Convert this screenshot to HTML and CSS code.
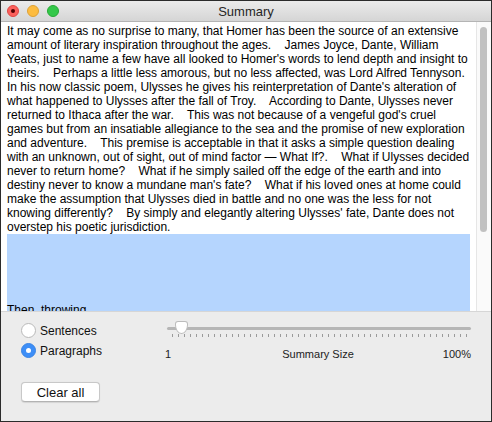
FILE: index.html
```html
<!DOCTYPE html>
<html>
<head>
<meta charset="utf-8">
<link rel="stylesheet" href="styles.css">
</head>
<body>
<div class="window">
  <div class="titlebar">
    <div class="lights">
      <span class="light close"><span class="dot"></span></span>
      <span class="light min"></span>
      <span class="light max"></span>
    </div>
    <div class="title">Summary</div>
  </div>
  <div class="content">
    <div class="textview">
      <p class="para">It may come as no surprise to many, that Homer has been the source of an extensive amount of literary inspiration throughout the ages.&nbsp;&nbsp;&nbsp; James Joyce, Dante, William Yeats, just to name a few have all looked to Homer's words to lend depth and insight to theirs.&nbsp;&nbsp;&nbsp; Perhaps a little less amorous, but no less affected, was Lord Alfred Tennyson. In his now classic poem, Ulysses he gives his reinterpretation of Dante's alteration of what happened to Ulysses after the fall of Troy.&nbsp;&nbsp;&nbsp; According to Dante, Ulysses never returned to Ithaca after the war.&nbsp;&nbsp;&nbsp; This was not because of a vengeful god's cruel games but from an insatiable allegiance to the sea and the promise of new exploration and adventure.&nbsp;&nbsp;&nbsp; This premise is acceptable in that it asks a simple question dealing with an unknown, out of sight, out of mind factor — What If?.&nbsp;&nbsp;&nbsp; What if Ulysses decided never to return home?&nbsp;&nbsp;&nbsp; What if he simply sailed off the edge of the earth and into destiny never to know a mundane man's fate?&nbsp;&nbsp;&nbsp; What if his loved ones at home could make the assumption that Ulysses died in battle and no one was the less for not knowing differently?&nbsp;&nbsp;&nbsp; By simply and elegantly altering Ulysses' fate, Dante does not overstep his poetic jurisdiction.</p>
      <p class="para selected">Then, throwing</p>
    </div>
    <div class="scrollbar"><div class="thumb"></div></div>
  </div>
  <div class="panel">
    <div class="left">
      <div class="radios">
        <label class="radio"><span class="circle"></span>Sentences</label>
        <label class="radio"><span class="circle on"><span class="inner"></span></span>Paragraphs</label>
      </div>
      <button class="btn">Clear all</button>
    </div>
    <div class="slider">
      <div class="track"><span class="knob"></span></div>
      <div class="ticks"></div>
      <div class="labels"><span class="lmin">1</span><span class="lmid">Summary Size</span><span class="lmax">100%</span></div>
    </div>
  </div>
</div>
</body>
</html>
```
FILE: styles.css
```css
* { box-sizing: border-box; }
html, body { margin: 0; padding: 0; }
body {
  width: 492px;
  height: 422px;
  font-family: "Liberation Sans", Arial, sans-serif;
  color: #000;
  background: #fff;
}
.window {
  width: 492px;
  height: 422px;
  border: 1px solid #2b2b2b;
  display: flex;
  flex-direction: column;
  background: #ececec;
  overflow: hidden;
}
.titlebar {
  height: 21px;
  flex: none;
  position: relative;
  background: linear-gradient(#ebebeb, #d5d5d5);
  border-bottom: 1px solid #b4b4b4;
  display: flex;
  align-items: center;
  justify-content: center;
}
.lights {
  position: absolute;
  left: 6px;
  top: 4px;
  display: flex;
  gap: 8px;
}
.light {
  width: 12px;
  height: 12px;
  border-radius: 50%;
  display: flex;
  align-items: center;
  justify-content: center;
}
.close { background: #fc605c; border: 1px solid #de4743; }
.min { background: #fdbc40; border: 1px solid #dea236; }
.max { background: #34c84a; border: 1px solid #27aa35; }
.dot { width: 4px; height: 4px; border-radius: 50%; background: #4d0000; }
.title {
  font-size: 13px;
  color: #262626;
}
.content {
  flex: none;
  height: 290px;
  display: flex;
  background: #fff;
  border-bottom: 1px solid #d6d6d6;
}
.textview {
  flex: 1;
  overflow: hidden;
  padding: 2px 6px 0 6px;
  font-size: 12px;
  line-height: 14px;
}
.para { margin: 0; }
.selected {
  background: #b5d5fe;
  padding-top: 69px;
}
.scrollbar {
  width: 15px;
  flex: none;
  background: #fafafa;
  border-left: 1px solid #e6e6e6;
  padding: 5px 0 0 3px;
}
.thumb {
  width: 7px;
  height: 205px;
  border-radius: 4px;
  background: #c1c1c1;
}
.panel {
  flex: 1;
  display: flex;
  padding: 9px 20px 0 20px;
}
.left {
  width: 146px;
  display: flex;
  flex-direction: column;
}
.radios {
  display: flex;
  flex-direction: column;
  gap: 5px;
  margin-top: 2px;
}
.radio {
  display: flex;
  align-items: center;
  font-size: 12px;
  height: 15px;
  gap: 4px;
  color: #111;
}
.circle {
  width: 15px;
  height: 15px;
  border-radius: 50%;
  background: #fff;
  border: 1px solid #b9b9b9;
  display: flex;
  align-items: center;
  justify-content: center;
}
.circle.on { background: #3d8ef7; border-color: #3a84e4; }
.inner { width: 5px; height: 5px; border-radius: 50%; background: #fff; }
.btn {
  margin-top: 24px;
  width: 79px;
  height: 20px;
  padding: 0;
  font-family: "Liberation Sans", Arial, sans-serif;
  font-size: 13px;
  color: #111;
  background: #fff;
  border: 1px solid #c8c8c8;
  border-bottom-color: #b3b3b3;
  border-radius: 4px;
  box-shadow: 0 0.5px 1px rgba(0,0,0,0.1);
}
.slider {
  flex: 1;
  display: flex;
  flex-direction: column;
  padding-top: 6px;
}
.track {
  position: relative;
  height: 3px;
  border-radius: 2px;
  background: #b6b6b6;
}
.knob {
  position: absolute;
  left: 8px;
  top: -6px;
  width: 13px;
  height: 13px;
  background: #fff;
  border: 1px solid #bcbcbc;
  border-radius: 3px 3px 50% 50% / 3px 3px 70% 70%;
}
.ticks {
  margin: 4px 3px 0 5px;
  height: 3px;
  background: repeating-linear-gradient(90deg, #9a9a9a 0 1px, transparent 1px 6px);
}
.labels {
  margin: 11px 0 0 -2px;
  display: grid;
  grid-template-columns: 1fr auto 1fr;
  font-size: 11px;
  color: #222;
}
.lmax { text-align: right; }
```
